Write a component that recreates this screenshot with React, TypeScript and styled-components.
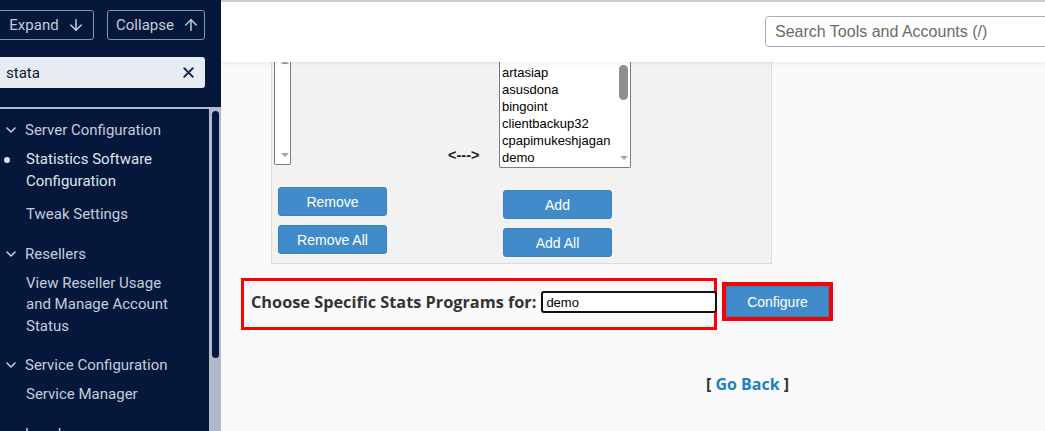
import styled, { createGlobalStyle } from 'styled-components';
import { ArrowDown, ArrowUp, X, ChevronDown } from 'lucide-react';

const GlobalStyle = createGlobalStyle`
  html, body {
    margin: 0;
    padding: 0;
    height: 100%;
    overflow: hidden;
  }
  #root {
    height: 100%;
  }
`;

const accounts = [
  'artasiap',
  'asusdona',
  'bingoint',
  'clientbackup32',
  'cpapimukeshjagan',
  'demo',
];

type NavEntry = { title: string; items: { label: string; active?: boolean }[] };

const nav: NavEntry[] = [
  {
    title: 'Server Configuration',
    items: [
      { label: 'Statistics Software Configuration', active: true },
      { label: 'Tweak Settings' },
    ],
  },
  {
    title: 'Resellers',
    items: [{ label: 'View Reseller Usage and Manage Account Status' }],
  },
  {
    title: 'Service Configuration',
    items: [{ label: 'Service Manager' }],
  },
  { title: 'Locales', items: [] },
];

export default function App() {
  return (
    <Page>
      <GlobalStyle />
      <Sidebar>
        <SideTop>
          <Toolbar>
            <SideButton>
              Expand <ArrowDown size={18} strokeWidth={2} />
            </SideButton>
            <SideButton>
              Collapse <ArrowUp size={18} strokeWidth={2} />
            </SideButton>
          </Toolbar>
          <SideSearch>
            <span>stata</span>
            <X size={17} strokeWidth={2.6} color="#1b2a4c" />
          </SideSearch>
        </SideTop>
        <NavWrap>
          <NavList>
            {nav.map((group) => (
              <NavGroup key={group.title}>
                <GroupTitle>
                  <ChevronDown size={16} strokeWidth={2.4} />
                  {group.title}
                </GroupTitle>
                {group.items.map((item) => (
                  <NavItem key={item.label} $active={item.active}>
                    {item.active && <Bullet />}
                    {item.label}
                  </NavItem>
                ))}
              </NavGroup>
            ))}
          </NavList>
          <ScrollTrack>
            <ScrollThumb />
          </ScrollTrack>
        </NavWrap>
      </Sidebar>

      <Main>
        <Header>
          <TopSearch placeholder="Search Tools and Accounts (/)" />
        </Header>
        <Content>
          <Panel>
            <Column>
              <ListBox $width={17} $height={103}>
                <ListItems />
                <ListScroll $full>
                  <ArrowMark $up />
                  <Spacer />
                  <ArrowMark />
                </ListScroll>
              </ListBox>
              <ButtonStack>
                <BlueButton>Remove</BlueButton>
                <BlueButton>Remove All</BlueButton>
              </ButtonStack>
            </Column>
            <Middle>&lt;---&gt;</Middle>
            <Column>
              <ListBox $width={132} $height={106}>
                <ListItems>
                  {accounts.map((a) => (
                    <ListOption key={a}>{a}</ListOption>
                  ))}
                </ListItems>
                <ListScroll>
                  <Thumb />
                  <Spacer />
                  <ArrowMark />
                </ListScroll>
              </ListBox>
              <ButtonStack>
                <BlueButton>Add</BlueButton>
                <BlueButton>Add All</BlueButton>
              </ButtonStack>
            </Column>
          </Panel>

          <FormRow>
            <Highlight>
              <Label>Choose Specific Stats Programs for:</Label>
              <UserInput defaultValue="demo" />
            </Highlight>
            <ButtonHighlight>
              <ConfigureButton>Configure</ConfigureButton>
            </ButtonHighlight>
          </FormRow>

          <BackRow>
            [ <a href="#">Go Back</a> ]
          </BackRow>
        </Content>
      </Main>
    </Page>
  );
}

const Page = styled.div`
  display: flex;
  width: 1045px;
  height: 431px;
  overflow: hidden;
  background: #fafafa;
`;

const Sidebar = styled.aside`
  width: 221px;
  flex-shrink: 0;
  display: flex;
  flex-direction: column;
  background: #05183b;
  font-family: Roboto, 'Noto Sans', sans-serif;
  overflow: hidden;
`;

const SideTop = styled.div`
  height: 109px;
  padding-top: 10px;
  box-sizing: border-box;
  border-bottom: 2px solid #b1b9cc;
`;

const Toolbar = styled.div`
  display: flex;
  gap: 13px;
  margin-left: -4px;
`;

const SideButton = styled.button`
  width: 98px;
  height: 30px;
  display: flex;
  align-items: center;
  justify-content: center;
  gap: 8px;
  background: transparent;
  border: 1px solid #8794ae;
  border-radius: 3px;
  color: #c3ccdd;
  font-family: Roboto, sans-serif;
  font-size: 15px;
  padding: 0 0 0 4px;
`;

const SideSearch = styled.div`
  width: 209px;
  height: 31px;
  margin: 17px 0 0 -4px;
  box-sizing: border-box;
  display: flex;
  align-items: center;
  justify-content: space-between;
  padding: 0 8px 0 10px;
  background: #e7ebf3;
  border-radius: 3px;
  color: #10182c;
  font-size: 15px;
`;

const NavWrap = styled.div`
  flex: 1;
  display: flex;
  min-height: 0;
`;

const NavList = styled.nav`
  flex: 1;
  color: #c3ccdd;
  font-size: 15px;
`;

const NavGroup = styled.div`
  margin-bottom: 2px;
`;

const GroupTitle = styled.div`
  display: flex;
  align-items: center;
  gap: 6px;
  line-height: 22px;
  padding: 10px 0 1px 3px;

  svg {
    color: #c3ccdd;
  }
`;

const NavItem = styled.div<{ $active?: boolean }>`
  position: relative;
  padding: 7px 36px 5px 26px;
  line-height: 21.5px;
  color: ${(p) => (p.$active ? '#dfe5ef' : '#c3ccdd')};
`;

const Bullet = styled.span`
  position: absolute;
  left: 4px;
  top: 15px;
  width: 6px;
  height: 6px;
  border-radius: 50%;
  background: #dfe5ef;
`;

const ScrollTrack = styled.div`
  width: 12px;
  background: #b1b9cc;
  padding: 2px 2px 0 3px;
  box-sizing: border-box;
`;

const ScrollThumb = styled.div`
  height: 247px;
  background: #05183b;
  border-radius: 4px;
`;

const Main = styled.div`
  flex: 1;
  display: flex;
  flex-direction: column;
  min-width: 0;
`;

const Header = styled.header`
  height: 60px;
  flex-shrink: 0;
  border-top: 2px solid #c9ced6;
  background: #ffffff;
  box-shadow: 0 1px 5px rgba(0, 0, 0, 0.08);
  display: flex;
  align-items: center;
  padding-left: 544px;
  position: relative;
  z-index: 1;
`;

const TopSearch = styled.input`
  width: 320px;
  height: 31px;
  flex-shrink: 0;
  box-sizing: border-box;
  border: 1px solid #a9b0bd;
  border-radius: 4px;
  padding: 0 9px;
  font-family: 'Liberation Sans', Arial, sans-serif;
  font-size: 16px;
  margin-top: -1px;

  &::placeholder {
    color: #6a6a6a;
  }
`;

const Content = styled.main`
  flex: 1;
  padding-left: 20px;
`;

const Panel = styled.div`
  margin-left: 30px;
  width: 501px;
  box-sizing: border-box;
  display: grid;
  grid-template-columns: 166px 59px auto;
  padding: 0 0 6px 2px;
  background: #f2f2f2;
  border: 1px solid #dcdcdc;
  border-top: 0;
`;

const Column = styled.div`
  display: flex;
  flex-direction: column;
`;

const ListBox = styled.div<{ $width: number; $height: number }>`
  width: ${(p) => p.$width}px;
  height: ${(p) => p.$height}px;
  box-sizing: border-box;
  display: flex;
  background: #ffffff;
  border: 1px solid #7a7a7a;
  border-top: 0;
  border-radius: 0 0 2px 2px;
  overflow: hidden;
`;

const ListItems = styled.div`
  flex: 1;
  padding: 3px 0 0 2px;
`;

const ListOption = styled.div`
  font-family: 'Liberation Sans', Arial, sans-serif;
  font-size: 13px;
  line-height: 16.9px;
  color: #000;
  white-space: nowrap;
`;

const ListScroll = styled.div<{ $full?: boolean }>`
  width: ${(p) => (p.$full ? '15px' : '13px')};
  flex-shrink: 0;
  display: flex;
  flex-direction: column;
  align-items: center;
  padding: 3px 0 7px;
  box-sizing: border-box;
`;

const Spacer = styled.div`
  flex: 1;
`;

const Thumb = styled.div`
  width: 9px;
  height: 35px;
  border-radius: 5px;
  background: #8e8e8e;
`;

const ArrowMark = styled.div<{ $up?: boolean }>`
  width: 0;
  height: 0;
  border-left: 4px solid transparent;
  border-right: 4px solid transparent;
  ${(p) =>
    p.$up
      ? `border-bottom: 4px solid #a3a3a3; margin-top: -5px;`
      : `border-top: 4px solid #a3a3a3;`}
`;

const Middle = styled.div`
  align-self: start;
  padding: 85px 0 0 8px;
  font-family: 'Liberation Sans', Arial, sans-serif;
  font-size: 14.5px;
  font-weight: 700;
  color: #222;
`;

const ButtonStack = styled.div`
  display: flex;
  flex-direction: column;
  gap: 9px;
  margin: 22px 0 0 4px;
`;

const BlueButton = styled.button`
  width: 109px;
  height: 29px;
  background: #428bca;
  border: 1px solid #3c82bf;
  border-radius: 3px;
  color: #ffffff;
  font-family: 'Liberation Sans', Arial, sans-serif;
  font-size: 14px;
  padding: 0;
`;

const FormRow = styled.div`
  display: flex;
  align-items: flex-start;
  margin-top: 14px;
  gap: 5px;
`;

const Highlight = styled.div`
  width: 476px;
  box-sizing: border-box;
  display: flex;
  align-items: center;
  border: 3px solid #ff0000;
  padding: 10px 0 14px 7px;
`;

const Label = styled.label`
  font-family: 'Open Sans', sans-serif;
  font-weight: 700;
  font-size: 16.3px;
  color: #333;
  white-space: nowrap;
  margin-right: 5px;
`;

const UserInput = styled.input`
  flex: 1;
  min-width: 0;
  height: 22px;
  box-sizing: border-box;
  border: 2px solid #111;
  border-radius: 3px;
  padding: 0 3px;
  margin-right: -3px;
  font-family: 'Liberation Sans', Arial, sans-serif;
  font-size: 13px;
  color: #000;
  background: #fff;
`;

const ButtonHighlight = styled.div`
  margin-top: 4px;
  border: 4px solid #ff0000;
  display: flex;
`;

const ConfigureButton = styled(BlueButton)`
  width: 103px;
  height: 31px;
  border-radius: 0;
`;

const BackRow = styled.div`
  margin: 43px 0 0 465px;
  font-family: 'Open Sans', sans-serif;
  font-weight: 700;
  font-size: 16px;
  color: #333;

  a {
    color: #1b7fc4;
    text-decoration: none;
  }
`;
